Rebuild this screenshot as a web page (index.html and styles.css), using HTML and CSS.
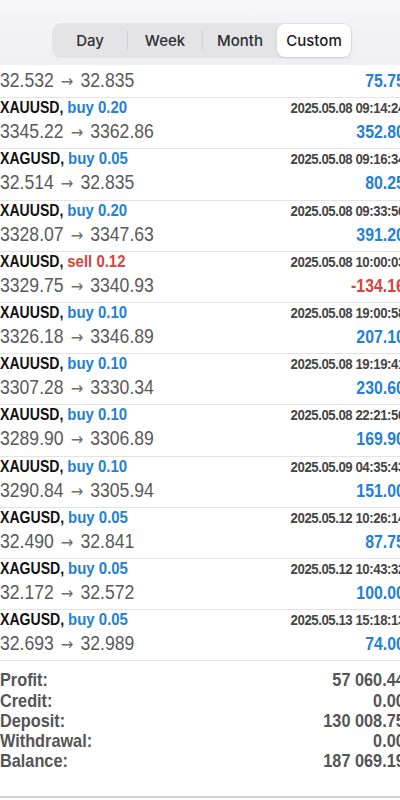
FILE: index.html
```html
<!DOCTYPE html>
<html>
<head lang="en">
    <meta charset="UTF-8">
    <title>History</title>
    <link rel="stylesheet" href="styles.css">
</head>
<body>
<div class="header">
    <div class="segmented">
        <span class="seg">Day</span>
        <span class="sep"></span>
        <span class="seg">Week</span>
        <span class="sep"></span>
        <span class="seg">Month</span>
        <span class="seg active">Custom</span>
    </div>
</div>
<div class="list">
    <div class="row partial">
        <div class="line2"><span class="prices">32.532<span class="arrow">&rarr;</span>32.835</span><span class="profit">75.75</span></div>
    </div>
    <div class="row">
        <div class="line1"><span class="sym">XAUUSD, <span class="buy">buy 0.20</span></span><span class="date">2025.05.08 09:14:24</span></div>
        <div class="line2"><span class="prices">3345.22<span class="arrow">&rarr;</span>3362.86</span><span class="profit">352.80</span></div>
    </div>
    <div class="row">
        <div class="line1"><span class="sym">XAGUSD, <span class="buy">buy 0.05</span></span><span class="date">2025.05.08 09:16:34</span></div>
        <div class="line2"><span class="prices">32.514<span class="arrow">&rarr;</span>32.835</span><span class="profit">80.25</span></div>
    </div>
    <div class="row">
        <div class="line1"><span class="sym">XAUUSD, <span class="buy">buy 0.20</span></span><span class="date">2025.05.08 09:33:56</span></div>
        <div class="line2"><span class="prices">3328.07<span class="arrow">&rarr;</span>3347.63</span><span class="profit">391.20</span></div>
    </div>
    <div class="row">
        <div class="line1"><span class="sym">XAUUSD, <span class="sell">sell 0.12</span></span><span class="date">2025.05.08 10:00:03</span></div>
        <div class="line2"><span class="prices">3329.75<span class="arrow">&rarr;</span>3340.93</span><span class="profit loss">-134.16</span></div>
    </div>
    <div class="row">
        <div class="line1"><span class="sym">XAUUSD, <span class="buy">buy 0.10</span></span><span class="date">2025.05.08 19:00:58</span></div>
        <div class="line2"><span class="prices">3326.18<span class="arrow">&rarr;</span>3346.89</span><span class="profit">207.10</span></div>
    </div>
    <div class="row">
        <div class="line1"><span class="sym">XAUUSD, <span class="buy">buy 0.10</span></span><span class="date">2025.05.08 19:19:41</span></div>
        <div class="line2"><span class="prices">3307.28<span class="arrow">&rarr;</span>3330.34</span><span class="profit">230.60</span></div>
    </div>
    <div class="row">
        <div class="line1"><span class="sym">XAUUSD, <span class="buy">buy 0.10</span></span><span class="date">2025.05.08 22:21:56</span></div>
        <div class="line2"><span class="prices">3289.90<span class="arrow">&rarr;</span>3306.89</span><span class="profit">169.90</span></div>
    </div>
    <div class="row">
        <div class="line1"><span class="sym">XAUUSD, <span class="buy">buy 0.10</span></span><span class="date">2025.05.09 04:35:43</span></div>
        <div class="line2"><span class="prices">3290.84<span class="arrow">&rarr;</span>3305.94</span><span class="profit">151.00</span></div>
    </div>
    <div class="row">
        <div class="line1"><span class="sym">XAGUSD, <span class="buy">buy 0.05</span></span><span class="date">2025.05.12 10:26:14</span></div>
        <div class="line2"><span class="prices">32.490<span class="arrow">&rarr;</span>32.841</span><span class="profit">87.75</span></div>
    </div>
    <div class="row">
        <div class="line1"><span class="sym">XAGUSD, <span class="buy">buy 0.05</span></span><span class="date">2025.05.12 10:43:32</span></div>
        <div class="line2"><span class="prices">32.172<span class="arrow">&rarr;</span>32.572</span><span class="profit">100.00</span></div>
    </div>
    <div class="row">
        <div class="line1"><span class="sym">XAGUSD, <span class="buy">buy 0.05</span></span><span class="date">2025.05.13 15:18:13</span></div>
        <div class="line2"><span class="prices">32.693<span class="arrow">&rarr;</span>32.989</span><span class="profit">74.00</span></div>
    </div>
</div>
<div class="summary">
    <div class="sum-row"><span>Profit:</span><span>57 060.44</span></div>
    <div class="sum-row"><span>Credit:</span><span>0.00</span></div>
    <div class="sum-row"><span>Deposit:</span><span>130 008.75</span></div>
    <div class="sum-row"><span>Withdrawal:</span><span>0.00</span></div>
    <div class="sum-row"><span>Balance:</span><span>187 069.19</span></div>
</div>
</body>
</html>
```

FILE: styles.css
```css
body {
    margin: 0px;
    width: 400px;
    height: 800px;
    overflow: hidden;
    background: #ffffff;
    font-family: "Liberation Sans", Arial, sans-serif;
}
.header {
    height: 65px;
    background: linear-gradient(#f6f6f8, #efeff1);
    display: flex;
    justify-content: center;
    align-items: flex-start;
    padding-top: 23px;
    box-sizing: border-box;
}
.segmented {
    display: flex;
    align-items: center;
    width: 300px;
    height: 35px;
    margin-left: 4px;
    padding: 1px;
    box-sizing: border-box;
    background: #e4e4e7;
    border-radius: 9px;
    font-family: Inter, "Liberation Sans", sans-serif;
    font-size: 15px;
    font-weight: 500;
    color: #2e2e30;
}
.seg {
    flex: 1;
    height: 33px;
    line-height: 33px;
    text-align: center;
}
.seg.active {
    background: #ffffff;
    border-radius: 8px;
    box-shadow: 0px 1px 3px rgba(0, 0, 0, 0.12);
    color: #1c1c1e;
}
.sep {
    width: 1px;
    height: 19px;
    background: #cfcfd3;
}
/* the app font is a narrow grotesque: squeeze the list horizontally */
.list, .summary {
    width: 460px;
    transform: scaleX(0.88);
    transform-origin: left top;
}
.row {
    border-bottom: 1px solid #e3e3e5;
    padding-bottom: 4.2px;
}
.row.partial {
    padding-top: 2px;
}
.line1, .line2 {
    display: flex;
    justify-content: space-between;
    align-items: baseline;
    white-space: nowrap;
}
.line1 {
    height: 20px;
    line-height: 20px;
}
.line2 {
    height: 26px;
    line-height: 26px;
}
.sym {
    font-size: 16px;
    font-weight: bold;
    color: #111111;
}
.buy {
    color: #2281d6;
    font-size: 17px;
}
.sell {
    color: #d7443a;
    font-size: 17px;
}
.date {
    font-size: 15px;
    font-weight: bold;
    letter-spacing: -0.5px;
    color: #454545;
}
.prices {
    font-size: 20px;
    color: #5a5a5a;
}
.arrow {
    display: inline-block;
    margin: 0px 8px;
    font-family: "DejaVu Sans", sans-serif;
    font-size: 17px;
    color: #6e6e6e;
}
.profit {
    font-size: 18px;
    font-weight: bold;
    color: #2281d6;
}
.profit.loss {
    color: #d7443a;
}
.summary {
    padding: 9px 0px 24px 0px;
    border-bottom: 2px solid #d4d4d6;
}
.sum-row {
    display: flex;
    justify-content: space-between;
    height: 20.3px;
    line-height: 20px;
    font-size: 18.5px;
    font-weight: bold;
    color: #555555;
}
```
